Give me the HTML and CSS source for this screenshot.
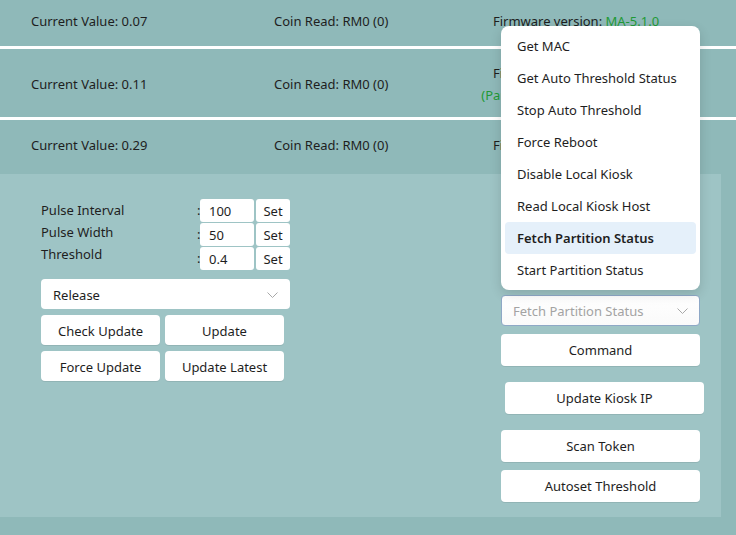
FILE: index.html
```html
<!DOCTYPE html>
<html>
<head>
<meta charset="utf-8">
<link rel="stylesheet" href="styles.css">
</head>
<body>
<div class="rows">
  <div class="row row1">
    <div class="cell">Current Value: 0.07</div>
    <div class="cell">Coin Read: RM0 (0)</div>
    <div class="cell fw"><div>Firmware version: <span class="green">MA-5.1.0</span></div></div>
  </div>
  <div class="row row2">
    <div class="cell">Current Value: 0.11</div>
    <div class="cell">Coin Read: RM0 (0)</div>
    <div class="cell fw"><div>Firmware version: <span class="green">MA-5.1.0</span></div><div class="green">(Partition Status: Not Available)</div></div>
  </div>
  <div class="row row3">
    <div class="cell">Current Value: 0.29</div>
    <div class="cell">Coin Read: RM0 (0)</div>
    <div class="cell fw"><div>Firmware version: <span class="green">MA-5.1.0</span></div></div>
  </div>
</div>
<div class="panel">
  <div class="left">
    <div class="params">
      <div class="labels">
        <div>Pulse Interval</div>
        <div>Pulse Width</div>
        <div>Threshold</div>
      </div>
      <div class="inputs">
        <div class="irow"><span class="colon">:</span><span class="field">100</span><span class="setbtn">Set</span></div>
        <div class="irow"><span class="colon">:</span><span class="field">50</span><span class="setbtn">Set</span></div>
        <div class="irow"><span class="colon">:</span><span class="field">0.4</span><span class="setbtn">Set</span></div>
      </div>
    </div>
    <div class="select release"><span>Release</span><svg class="chev" width="11" height="6" viewBox="0 0 11 6"><polyline points="0.5,0.5 5.5,5.5 10.5,0.5" fill="none" stroke="#a8a8a8" stroke-width="1"/></svg></div>
    <div class="btngrid">
      <div class="btn">Check Update</div>
      <div class="btn">Update</div>
      <div class="btn">Force Update</div>
      <div class="btn">Update Latest</div>
    </div>
  </div>
  <div class="right">
    <div class="select combo"><span>Fetch Partition Status</span><svg class="chev" width="11" height="6" viewBox="0 0 11 6"><polyline points="0.5,0.5 5.5,5.5 10.5,0.5" fill="none" stroke="#a8a8a8" stroke-width="1"/></svg></div>
    <div class="btn wide cmd">Command</div>
    <div class="btn wide kiosk">Update Kiosk IP</div>
    <div class="btn wide scan">Scan Token</div>
    <div class="btn wide autoset">Autoset Threshold</div>
  </div>
</div>
<div class="popup">
  <div class="item">Get MAC</div>
  <div class="item">Get Auto Threshold Status</div>
  <div class="item">Stop Auto Threshold</div>
  <div class="item">Force Reboot</div>
  <div class="item">Disable Local Kiosk</div>
  <div class="item">Read Local Kiosk Host</div>
  <div class="item selected">Fetch Partition Status</div>
  <div class="item">Start Partition Status</div>
</div>
</body>
</html>
```
FILE: styles.css
```css
html, body {
  margin: 0;
  padding: 0;
}
body {
  width: 736px;
  height: 535px;
  overflow: hidden;
  background: #8fb9b9;
  font-family: "Noto Sans", "Open Sans", sans-serif;
  font-size: 13px;
  color: #1e1e1e;
  position: relative;
}
.rows {
  display: flex;
  flex-direction: column;
}
.row {
  display: grid;
  grid-template-columns: 243px 188px 228px;
  padding-left: 31px;
  align-items: center;
  background: #8fb9b9;
  box-sizing: border-box;
}
.row1 { height: 49px; padding-bottom: 4px; border-bottom: 3px solid #ffffff; }
.row2 { height: 71px; padding-top: 2px; border-bottom: 3px solid #ffffff; }
.row3 { height: 54px; padding-bottom: 4px; }
.fw {
  text-align: center;
  line-height: 22px;
  white-space: nowrap;
}
.green { color: #1f9a36; }

.panel {
  width: 721px;
  height: 343px;
  background: #9ec4c5;
  display: flex;
  box-sizing: border-box;
  padding: 25px 21px 0 41px;
}
.left {
  width: 249px;
  display: flex;
  flex-direction: column;
}
.params {
  display: flex;
}
.labels {
  width: 156px;
  line-height: 22px;
}
.inputs {
  display: flex;
  flex-direction: column;
  gap: 1px;
}
.irow {
  display: flex;
  align-items: center;
  height: 23px;
}
.colon {
  width: 3px;
  text-align: left;
  line-height: 23px;
}
.field {
  width: 54px;
  height: 23px;
  background: #ffffff;
  border-radius: 3px;
  box-sizing: border-box;
  padding-left: 9px;
  line-height: 24px;
  margin-right: 2px;
}
.setbtn {
  width: 34px;
  height: 23px;
  background: #ffffff;
  border-radius: 3px;
  text-align: center;
  line-height: 24px;
}
.select {
  display: flex;
  align-items: center;
  justify-content: space-between;
  background: #ffffff;
  border-radius: 4px;
  box-sizing: border-box;
}
.release {
  margin-top: 9px;
  height: 30px;
  padding: 1px 12px 0 12px;
}
.btngrid {
  display: grid;
  grid-template-columns: 119px 119px;
  column-gap: 5px;
  row-gap: 6px;
  margin-top: 6px;
}
.btn {
  height: 30px;
  background: #ffffff;
  border-radius: 4px;
  text-align: center;
  line-height: 32px;
  box-shadow: 0 1px 0 rgba(0,0,0,0.08);
}
.right {
  margin-left: auto;
  width: 199px;
  display: flex;
  flex-direction: column;
  padding-top: 96px;
}
.combo {
  height: 31px;
  border: 1px solid #8ea8c6;
  padding: 0 11px 0 11px;
  color: #a3a3a3;
  background: linear-gradient(#ffffff, #fafafa);
}
.wide { height: 32px; line-height: 33px; }
.cmd { margin-top: 8px; }
.kiosk { margin-top: 16px; margin-left: 4px; margin-right: -4px; }
.scan { margin-top: 16px; }
.autoset { margin-top: 8px; }

.popup {
  position: absolute;
  left: 501px;
  top: 26px;
  width: 199px;
  height: 264px;
  box-sizing: border-box;
  padding: 4px;
  background: #ffffff;
  border-radius: 8px;
  box-shadow: 0 4px 12px rgba(0,0,0,0.14);
  display: flex;
  flex-direction: column;
}
.item {
  height: 32px;
  line-height: 32px;
  padding-left: 12px;
  border-radius: 4px;
  white-space: nowrap;
}
.selected {
  background: #e5f0fa;
  font-weight: 600;
}
```
